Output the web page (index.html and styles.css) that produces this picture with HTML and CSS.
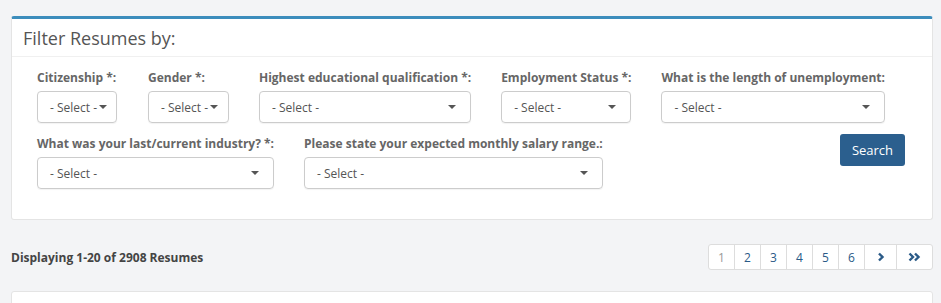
FILE: index.html
```html
<!DOCTYPE html>
<html lang="en">
<head>
    <meta charset="UTF-8">
    <title>Resumes</title>
    <link rel="stylesheet" href="styles.css">
</head>
<body>

    <div class="page">
        <div class="box">
            <div class="box-header">
                <h3>Filter Resumes by:</h3>
            </div>
            <div class="box-body">
                <div class="filter-row">
                    <div class="field first">
                        <label>Citizenship *:</label>
                        <div class="select w80"><span>- Select -</span><i class="caret"></i></div>
                    </div>
                    <div class="field">
                        <label>Gender *:</label>
                        <div class="select w81"><span>- Select -</span><i class="caret"></i></div>
                    </div>
                    <div class="field">
                        <label>Highest educational qualification *:</label>
                        <div class="select wide w212"><span>- Select -</span><i class="caret"></i></div>
                    </div>
                    <div class="field">
                        <label>Employment Status *:</label>
                        <div class="select wide w130"><span>- Select -</span><i class="caret"></i></div>
                    </div>
                    <div class="field">
                        <label>What is the length of unemployment:</label>
                        <div class="select wide w224"><span>- Select -</span><i class="caret"></i></div>
                    </div>
                </div>
                <div class="filter-row">
                    <div class="field">
                        <label>What was your last/current industry? *:</label>
                        <div class="select wide w237"><span>- Select -</span><i class="caret"></i></div>
                    </div>
                    <div class="field">
                        <label>Please state your expected monthly salary range.:</label>
                        <div class="select wide w299"><span>- Select -</span><i class="caret"></i></div>
                    </div>
                    <button class="btn-search">Search</button>
                </div>
            </div>
        </div>

        <div class="results-bar">
            <div class="count">Displaying 1-20 of 2908 Resumes</div>
            <ul class="pagination">
                <li class="current">1</li>
                <li>2</li>
                <li>3</li>
                <li>4</li>
                <li>5</li>
                <li>6</li>
                <li class="arrow next">
                    <svg width="8" height="10" viewBox="0 0 8 10"><path d="M2 1.5 L5.5 5 L2 8.5" fill="none" stroke="#2a5a87" stroke-width="2.4"/></svg>
                </li>
                <li class="arrow last">
                    <svg width="13" height="10" viewBox="0 0 13 10"><path d="M1.5 1.5 L5 5 L1.5 8.5 M7 1.5 L10.5 5 L7 8.5" fill="none" stroke="#2a5a87" stroke-width="2.4"/></svg>
                </li>
            </ul>
        </div>

        <div class="box list-box"></div>
    </div>

</body>
</html>
```

FILE: styles.css
```css
body {
    margin: 0;
    background-color: #f3f4f6;
    font-family: "Open Sans", Arial, sans-serif;
    color: #444;
    overflow: hidden;
}
.page {
    padding: 16px 8px 0 11px;
}
.box {
    background-color: #fff;
    border: 1px solid #e4e4e4;
    border-top: 3px solid #3c8dbc;
    border-radius: 3px;
}
.box-header {
    height: 37px;
    border-bottom: 1px solid #f0f0f0;
    padding: 0 11px;
    display: flex;
    align-items: center;
}
.box-header h3 {
    margin: 0;
    font-size: 18px;
    font-weight: 400;
    color: #555;
}
.box-body {
    padding: 12px 27px 30px 25px;
    display: flex;
    flex-direction: column;
    gap: 12px;
}
.filter-row {
    display: flex;
    gap: 30px;
    align-items: flex-start;
}
.field {
    display: flex;
    flex-direction: column;
}
.field.first {
    margin-right: 1px;
}
.field label {
    font-size: 12px;
    font-weight: 700;
    color: #666;
    line-height: 17px;
    margin-bottom: 5px;
    white-space: nowrap;
}
.select {
    box-sizing: border-box;
    height: 32px;
    border: 1px solid #ccc;
    border-radius: 4px;
    display: flex;
    align-items: center;
    padding: 0 12px;
    font-size: 12px;
    color: #555;
    box-shadow: 0 1px 1px rgba(0, 0, 0, 0.05);
}
.select span {
    white-space: nowrap;
}
.select.wide span {
    flex: 1;
}
.caret {
    display: inline-block;
    width: 0;
    height: 0;
    border-left: 4px solid transparent;
    border-right: 4px solid transparent;
    border-top: 4px solid #555;
    margin-left: 2px;
}
.select.wide .caret {
    margin-right: 2px;
}
.w80 { width: 80px; }
.w81 { width: 81px; }
.w212 { width: 212px; }
.w130 { width: 130px; }
.w224 { width: 224px; }
.w237 { width: 237px; }
.w299 { width: 299px; }

.btn-search {
    margin-left: auto;
    margin-top: -1px;
    width: 65px;
    height: 32px;
    border: none;
    border-radius: 3px;
    background-color: #2b5f8e;
    color: #fff;
    font-family: "Open Sans", Arial, sans-serif;
    font-size: 13px;
    padding: 0;
}
.results-bar {
    display: flex;
    justify-content: space-between;
    align-items: center;
    margin-top: 24px;
}
.count {
    font-size: 12px;
    font-weight: 700;
    color: #444;
}
.pagination {
    display: flex;
    list-style: none;
    margin: 0;
    padding: 0;
    background-color: #fff;
    border: 1px solid #ddd;
    border-radius: 3px;
}
.pagination li {
    width: 25px;
    height: 24px;
    display: flex;
    align-items: center;
    justify-content: center;
    font-size: 12px;
    color: #2a5a87;
    border-left: 1px solid #ddd;
}
.pagination li:first-child {
    border-left: none;
}
.pagination li.current {
    color: #999;
}
.pagination li.next {
    width: 31px;
}
.pagination li.last {
    width: 35px;
}
.list-box {
    margin-top: 21px;
    height: 40px;
    border-top: 1px solid #e4e4e4;
}
```
